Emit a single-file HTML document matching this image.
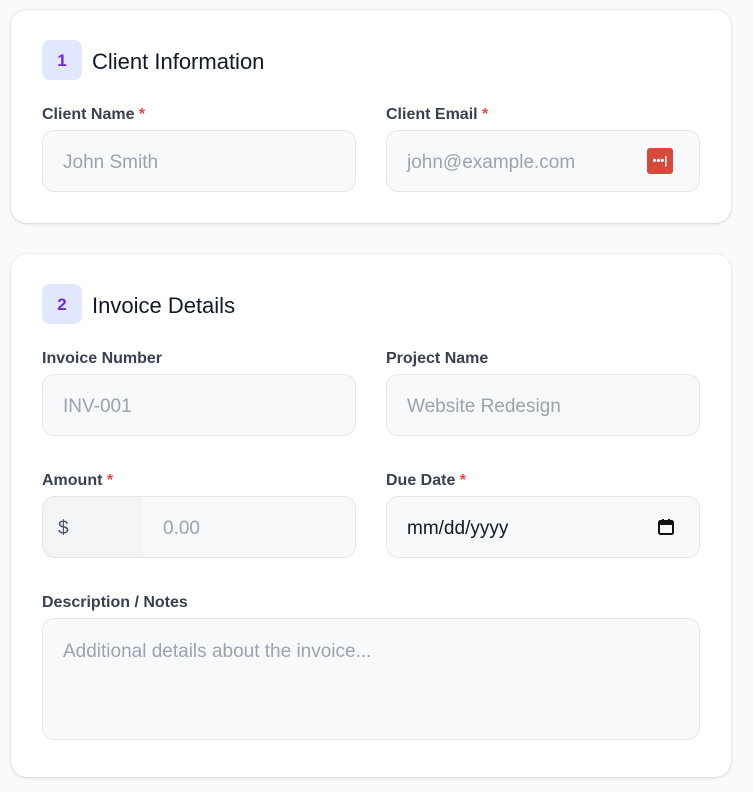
<!DOCTYPE html>
<html><head><style>
*{box-sizing:border-box;margin:0;padding:0}
body{width:753px;height:792px;background:#f9fafb;font-family:"Liberation Sans",sans-serif;position:relative;overflow:hidden}
.card{position:absolute;left:11px;width:720px;background:#fff;border-radius:16px;box-shadow:0 1px 3px rgba(0,0,0,.12),0 0 0 1px rgba(0,0,0,.03)}
.badge{position:absolute;width:40px;height:40px;border-radius:8px;background:#e0e7ff;color:#6d28d9;font-weight:bold;font-size:17px;display:flex;align-items:center;justify-content:center;padding-top:2px}
.title{position:absolute;font-size:22px;color:#111827;font-weight:500}
.lbl{position:absolute;font-size:16px;font-weight:bold;color:#374151}
.lbl span{color:#ef4444}
.in{position:absolute;width:314px;height:62px;border:1px solid #e5e7eb;border-radius:12px;background:#f8f9fb;color:#9ca3af;font-size:19px;padding-left:20px;padding-top:4px;display:flex;align-items:center;overflow:hidden}
</style></head><body>
<div class="card" style="top:10px;height:213px"></div>
<div class="badge" style="left:42px;top:40px">1</div>
<div class="title" style="left:92px;top:49px">Client Information</div>
<div class="lbl" style="left:42px;top:106px">Client Name <span>*</span></div>
<div class="lbl" style="left:386px;top:106px">Client Email <span>*</span></div>
<div class="in" style="left:42px;top:130px">John Smith</div>
<div class="in" style="left:386px;top:130px">john@example.com
<div style="position:absolute;left:260px;top:17px;width:26px;height:26px;background:#d44b3c;border-radius:3px;color:#fff;font-size:11px;display:flex;align-items:center;justify-content:center;font-weight:bold">•••|</div></div>
<div class="card" style="top:254px;height:523px"></div>
<div class="badge" style="left:42px;top:284px">2</div>
<div class="title" style="left:92px;top:293px">Invoice Details</div>
<div class="lbl" style="left:42px;top:350px">Invoice Number</div>
<div class="lbl" style="left:386px;top:350px">Project Name</div>
<div class="in" style="left:42px;top:374px">INV-001</div>
<div class="in" style="left:386px;top:374px">Website Redesign</div>
<div class="lbl" style="left:42px;top:472px">Amount <span>*</span></div>
<div class="lbl" style="left:386px;top:472px">Due Date <span>*</span></div>
<div class="in" style="left:42px;top:496px;padding:0">
<div style="width:100px;height:100%;background:#f3f4f6;color:#4b5563;display:flex;align-items:center;padding-left:15px;padding-top:4px">$</div>
<div style="padding-left:20px;padding-top:4px">0.00</div></div>
<div class="in" style="left:386px;top:496px;color:#111827">mm/dd/yyyy
<svg style="position:absolute;left:270px;top:21px" width="18" height="18" viewBox="0 0 18 18"><rect x="2" y="3" width="14" height="13" rx="1.5" fill="none" stroke="#111" stroke-width="2"/><rect x="2" y="3" width="14" height="4" fill="#111"/><rect x="5" y="1" width="2" height="3" fill="#111"/><rect x="11" y="1" width="2" height="3" fill="#111"/></svg></div>
<div class="lbl" style="left:42px;top:594px">Description / Notes</div>
<div class="in" style="left:42px;top:618px;width:658px;height:122px;align-items:flex-start;padding-top:22px">Additional details about the invoice...</div>
</body></html>
